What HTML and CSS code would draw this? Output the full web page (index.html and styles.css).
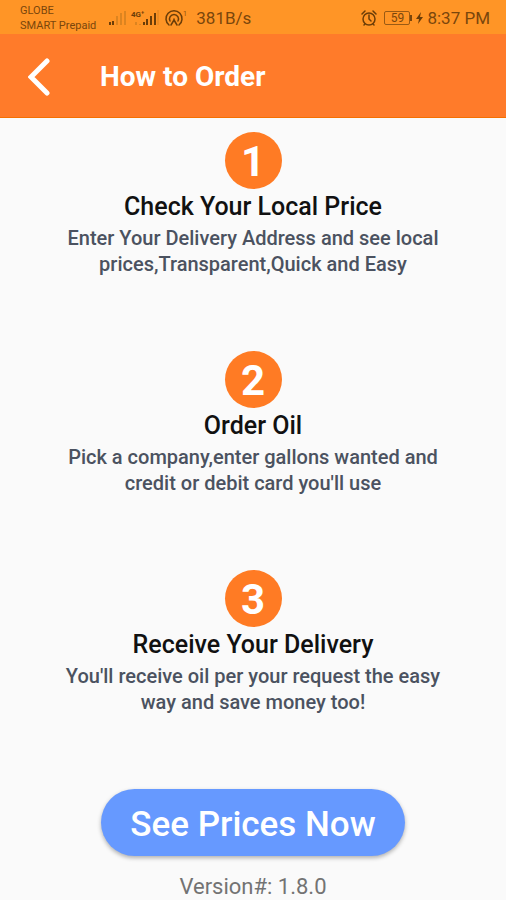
FILE: index.html
```
<!DOCTYPE html>
<html lang="en">

<head>
    <meta charset="UTF-8">
    <meta name="viewport" content="width=device-width, initial-scale=1.0">
    <title>How to Order</title>
    <link rel="stylesheet" href="styles.css">
</head>

<body>
<div class="status">
    <div class="carrier">GLOBE<br>SMART Prepaid</div>
    <svg class="signals" width="78" height="20" viewBox="0 0 78 20" aria-hidden="true">
        <!-- first sim -->
        <path d="M1 17v-3M4 17v-4" stroke="#6b3d08" stroke-width="2"/>
        <path d="M8 17V8M12 17V5M16 17V3" stroke="#dc8420" stroke-width="2"/>
        <!-- second sim -->
        <text x="22" y="9" font-size="8" font-weight="700" fill="#6b3d08">4G⁺</text>
        <path d="M27 14v3M31 17v-1" stroke="#dc8420" stroke-width="2"/>
        <path d="M35 17v-3M38 17v-6M42 17V8M46 17V5" stroke="#6b3d08" stroke-width="2"/>
        <path d="M49 17V2" stroke="#dc8420"/>
        <!-- hotspot -->
        <g fill="none" stroke="#6b3d08" stroke-width="1.5" stroke-linecap="round">
            <path d="M60 17a8 8 0 1 1 10 0"/>
            <path d="M61 13a4.500 4.500 0 1 1 8 0"/>
            <path d="M65 11v1M65 12l-3 5M65 12l3 5"/>
        </g>
        <text x="74" y="8" font-size="7" fill="#8a4d0c">1</text>
    </svg>
    <span class="speed">381B/s</span>
    <svg class="alarm" width="16" height="16" viewBox="0 0 16 16" aria-hidden="true">
        <g fill="none" stroke="#6b3d08" stroke-width="1.500" stroke-linecap="round">
            <circle cx="8" cy="9" r="6"/>
            <path d="M8 5v4l2 2M1 4l3-3M15 4l-3-3M4 14l-1 1M12 14l1 1"/>
        </g>
    </svg>
    <span class="battery">59</span>
    <svg class="bolt" width="7" height="12" viewBox="0 0 7 12" aria-hidden="true">
        <path d="M5 0L0 7h3l-1 5 5-7H4z" fill="#6b3d08"/>
    </svg>
    <span class="time">8:37 PM</span>
</div>

<header class="header">
    <button class="back" type="button" aria-label="Back">
        <svg width="22" height="38" viewBox="0 0 22 38">
            <path d="M19 3L3 19l16 16" fill="none" stroke="#fff" stroke-width="5" stroke-linecap="round"/>
        </svg>
    </button>
    <h1>How to Order</h1>
</header>

<main class="main">
    <section class="step">
        <span class="num">1</span>
        <h2>Check Your Local Price</h2>
        <p>Enter Your Delivery Address and see local prices,Transparent,Quick and Easy</p>
    </section>
    <section class="step">
        <span class="num">2</span>
        <h2>Order Oil</h2>
        <p>Pick a company,enter gallons wanted and credit or debit card you'll use</p>
    </section>
    <section class="step">
        <span class="num">3</span>
        <h2>Receive Your Delivery</h2>
        <p>You'll receive oil per your request the easy way and save money too!</p>
    </section>
    <button class="prices" type="button">See Prices Now</button>
    <p class="version">Version#: 1.8.0</p>
</main>
</body>

</html>
```
FILE: styles.css
```
* {
    margin: 0;
    padding: 0;
    box-sizing: border-box;
}

body {
    background: #fafafa;
    font-family: Roboto, "Liberation Sans", sans-serif;
}

button {
    border: 0;
    font-family: inherit;
    cursor: pointer;
}

/* status bar */
.status {
    display: flex;
    align-items: center;
    height: 34px;
    padding: 2px 16px 0 20px;
    background: #ff9526;
    color: #7a460c;
    font-size: 17px;
}

.carrier {
    font-size: 11px;
    line-height: 15px;
    white-space: nowrap;
}

.signals {
    margin-left: 13px;
}

.speed {
    margin-left: 9px;
}

.alarm {
    margin-left: auto;
}

.battery {
    position: relative;
    width: 26px;
    height: 14px;
    margin-left: 7px;
    border: 1px solid #9a5a14;
    border-radius: 2px;
    font-size: 12px;
    line-height: 12px;
    text-align: center;
}

.battery::after {
    content: "";
    position: absolute;
    top: 3px;
    right: -3px;
    width: 2px;
    height: 6px;
    background: #7a460c;
}

.bolt {
    margin: 0 4px 0 6px;
}

/* title bar */
.header {
    display: flex;
    align-items: center;
    height: 84px;
    padding: 2px 28px 0;
    background: #ff7b2a;
    border-bottom: 1px solid #f57000;
    color: #fff;
}

.back {
    display: flex;
    width: 72px;
    background: none;
}

.header h1 {
    font-size: 28px;
    font-weight: 700;
    line-height: 36px;
}

/* steps */
.main {
    display: flex;
    flex-direction: column;
    align-items: center;
    padding-top: 14px;
    text-align: center;
}

.step {
    display: flex;
    flex-direction: column;
    align-items: center;
    max-width: 384px;
    margin-bottom: 74px;
}

.num {
    width: 57px;
    height: 57px;
    border-radius: 50%;
    background: #ff7b24;
    color: #fff;
    font-size: 42px;
    font-weight: 700;
    line-height: 60px;
}

.step h2 {
    color: #111;
    font-size: 25px;
    font-weight: 500;
    line-height: 36px;
}

.step p {
    color: #4b5260;
    font-size: 20px;
    font-weight: 500;
    line-height: 26px;
}

.prices {
    height: 67px;
    padding: 4px 29px 0;
    border-radius: 34px;
    background: #6699ff;
    box-shadow: 0 2px 4px rgba(0, 0, 0, 0.3);
    color: #fff;
    font-size: 35px;
    font-weight: 500;
}

.version {
    margin-top: 18px;
    color: #737373;
    font-size: 22px;
    line-height: 26px;
}
```
